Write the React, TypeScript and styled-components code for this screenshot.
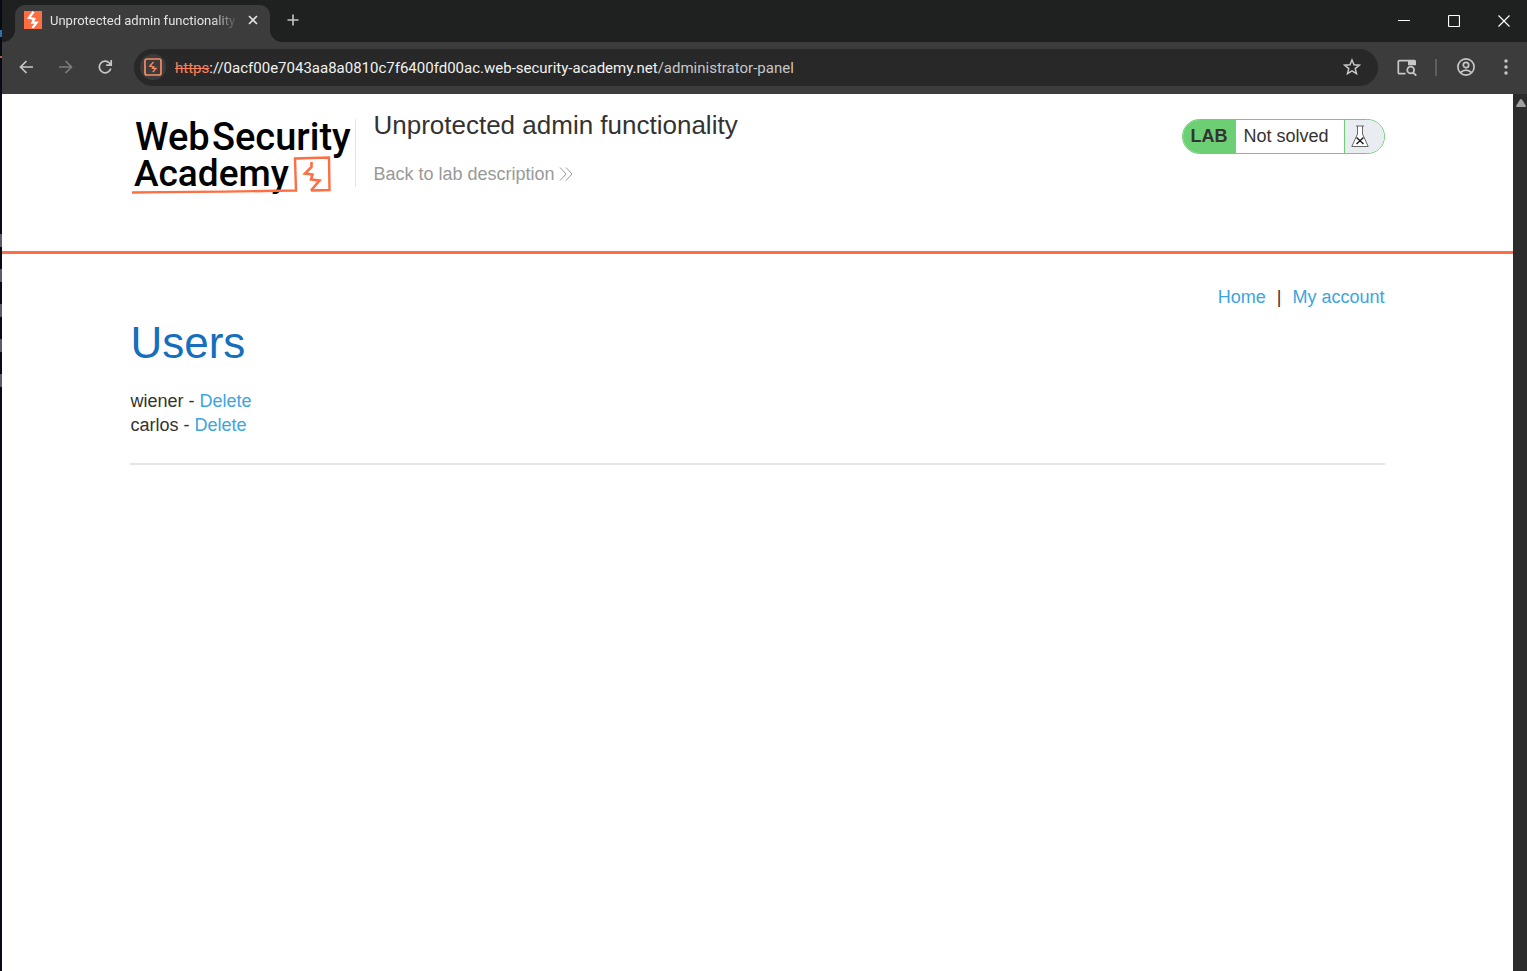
import React from "react";
import styled, { createGlobalStyle } from "styled-components";

const GlobalStyle = createGlobalStyle`
  *, *::before, *::after { box-sizing: border-box; }
  body { margin: 0; background: #ffffff; font-family: "Liberation Sans", Arial, sans-serif; }
  h1, h2, p, ul { margin: 0; padding: 0; font-weight: 400; }
  ul { list-style: none; }
  button { font: inherit; }
`;

const Desktop = styled.div`
  padding-left: 2px;
  background:
    linear-gradient(#2f6fb0, #2f6fb0) 0 30px / 2px 7px no-repeat,
    linear-gradient(#b5603f, #b5603f) 0 56px / 2px 2px no-repeat,
    repeating-linear-gradient(#5a5d66 0 13px, transparent 13px 35px) 0 234px / 2px 155px no-repeat,
    #070a12;
`;

const Window = styled.div`
  display: flex;
  flex-direction: column;
  min-height: 100vh;
  background: #ffffff;
`;

const TitleBar = styled.div`
  display: flex;
  align-items: stretch;
  height: 42px;
  background: #1f2120;
`;

const Tab = styled.div`
  position: relative;
  display: flex;
  align-items: center;
  width: 255px;
  margin: 5px 0 0 13px;
  padding: 0 7px 7px 9px;
  border-radius: 10px 10px 0 0;
  background: #3c3c3c;

  &::before, &::after {
    content: "";
    position: absolute;
    bottom: 0;
    width: 12px;
    height: 12px;
  }
  &::before { left: -12px; background: radial-gradient(circle at 0 0, #1f2120 12px, #3c3c3c 12px); }
  &::after { right: -12px; background: radial-gradient(circle at 100% 0, #1f2120 12px, #3c3c3c 12px); }
`;

const TabTitle = styled.span`
  flex: 1;
  min-width: 0;
  margin-left: 8px;
  padding-top: 2px;
  overflow: hidden;
  white-space: nowrap;
  color: #e3e3e3;
  font: 400 13px/18px Roboto, "Open Sans", sans-serif;
  mask-image: linear-gradient(to right, #000 84%, transparent 98%);
`;

const IconButton = styled.button<{ $size?: number; $color?: string }>`
  display: flex;
  align-items: center;
  justify-content: center;
  flex: none;
  width: ${(p) => p.$size ?? 28}px;
  height: ${(p) => p.$size ?? 28}px;
  padding: 0;
  border: 0;
  border-radius: 50%;
  background: transparent;
  color: ${(p) => p.$color ?? "#c7c7c7"};
`;

const NewTab = styled(IconButton)`
  margin: 6px 0 0 9px;
`;

const MenuButton = styled(IconButton)`
  margin-left: 12px;
`;

const WindowControls = styled.div`
  display: flex;
  gap: 4px;
  margin-left: auto;
`;

const WindowButton = styled.button`
  display: flex;
  align-items: center;
  justify-content: center;
  width: 46px;
  padding: 0;
  border: 0;
  background: transparent;
  color: #ffffff;
`;

const Toolbar = styled.div`
  display: flex;
  align-items: center;
  height: 52px;
  padding: 0 7px 2px 10px;
  background: #3c3c3c;
`;

const NavButtons = styled.div`
  display: flex;
  gap: 12px;
  margin-right: 14px;
`;

const AddressBar = styled.div`
  display: flex;
  align-items: center;
  flex: 1;
  height: 37px;
  padding: 0 12px 0 6px;
  border-radius: 19px;
  background: #282828;
`;

const SiteButton = styled(IconButton)`
  background: #3c3c3c;
`;

const Url = styled.span`
  flex: 1;
  margin-left: 9px;
  padding-top: 2px;
  white-space: nowrap;
  color: #c7c7c7;
  font: 400 15px/20px Roboto, "Open Sans", sans-serif;
`;

const Scheme = styled.s`
  color: #fa8059;
`;

const Host = styled.span`
  color: #f1f1f1;
`;

const ToolbarActions = styled.div`
  display: flex;
  align-items: center;
  margin-left: 15px;
`;

const Divider = styled.span`
  width: 2px;
  height: 17px;
  margin: 0 15px 0 14px;
  background: #5e5e5e;
`;

const Viewport = styled.div`
  display: flex;
  flex: 1;
`;

const Page = styled.main`
  flex: 1;
  color: #333332;
  font-size: 18px;
  line-height: 24px;
`;

const Scrollbar = styled.div`
  display: flex;
  justify-content: center;
  width: 14px;
  padding: 5px 0 0 2px;
  background: #2c2c2c;
`;

const Container = styled.div`
  width: 83%;
  margin: 0 auto;
`;

const LabHeader = styled.header`
  height: 160px;
  border-bottom: 3px solid #ff6d42;
`;

const HeaderRow = styled(Container)`
  display: flex;
  align-items: flex-start;
`;

const Logo = styled.a`
  display: block;
  width: 226px;
  height: 68px;
  margin-top: 25px;
  border-right: 1px solid #e4e4e4;
  text-decoration: none;

  svg { overflow: visible; }
`;

const TitleBlock = styled.div`
  flex: 1;
  padding: 15px 0 0 17px;
`;

const LabTitle = styled.h2`
  font-size: 26px;
  line-height: 32px;
`;

const BackLink = styled.a`
  display: inline-flex;
  align-items: center;
  gap: 4px;
  margin-top: 21px;
  color: #999999;
  text-decoration: none;
`;

const StatusPill = styled.div`
  display: flex;
  height: 35px;
  margin-top: 25px;
  overflow: hidden;
  border: 1px solid #6ccf74;
  border-radius: 18px;
  line-height: 33px;
`;

const StatusLabel = styled.strong`
  width: 53px;
  padding-left: 8px;
  background: #6ccf74;
`;

const StatusText = styled.p`
  width: 109px;
  padding-left: 8px;
  border-right: 1px solid #6ccf74;
`;

const StatusIcon = styled.span`
  display: flex;
  align-items: center;
  width: 39px;
  padding-left: 6px;
  background: #e9edf1;
`;

const TopLinks = styled.nav`
  display: flex;
  justify-content: flex-end;
  gap: 11px;
  padding-top: 31px;
`;

const Link = styled.a`
  color: #3ba5e0;
  text-decoration: none;
`;

const Heading = styled.h1`
  margin: 8px 0 20px;
  color: #156fbe;
  font-size: 44px;
  line-height: 52px;
`;

const UserList = styled.ul`
  padding-bottom: 26px;
  border-bottom: 2px solid #e5e5e5;
`;

const Svg = ({ w, h = w, children }: { w: number; h?: number; children: React.ReactNode }) => (
  <svg width={w} height={h} viewBox={`0 0 ${w} ${h}`} fill="none" stroke="currentColor" strokeWidth="2" aria-hidden="true">
    {children}
  </svg>
);

const users = ["wiener", "carlos"];

export default function App() {
  return (
    <Desktop>
      <GlobalStyle />
      <Window>
        <TitleBar>
          <Tab>
            <Svg w={18}>
              <rect width="18" height="18" fill="#ff6d42" stroke="none" />
              <path d="M9.6 0.8 L5 6.8 L10.2 8 L8.4 11.6 H12.6 L8.4 17" stroke="#fff" strokeWidth="2.3" />
            </Svg>
            <TabTitle>Unprotected admin functionality</TabTitle>
            <IconButton $size={20} $color="#e3e3e3" aria-label="Close tab">
              <Svg w={10}><path d="M1 1 L9 9 M9 1 L1 9" strokeWidth="1.6" /></Svg>
            </IconButton>
          </Tab>
          <NewTab aria-label="New tab">
            <Svg w={12}><path d="M6 0.5 V11.5 M0.5 6 H11.5" strokeWidth="1.6" /></Svg>
          </NewTab>
          <WindowControls>
            <WindowButton aria-label="Minimize"><Svg w={12}><path d="M0 5.5 H12" strokeWidth="1" /></Svg></WindowButton>
            <WindowButton aria-label="Maximize"><Svg w={12}><rect x="0.5" y="0.5" width="11" height="11" rx="1" strokeWidth="1.2" /></Svg></WindowButton>
            <WindowButton aria-label="Close"><Svg w={12}><path d="M0.5 0.5 L11.5 11.5 M11.5 0.5 L0.5 11.5" strokeWidth="1.2" /></Svg></WindowButton>
          </WindowControls>
        </TitleBar>
        <Toolbar>
          <NavButtons>
            <IconButton aria-label="Back">
              <Svg w={14}><path d="M14 7 H1.5 M7.5 1 L1.5 7 L7.5 13" strokeWidth="1.7" /></Svg>
            </IconButton>
            <IconButton $color="#7d7d7d" aria-label="Forward">
              <Svg w={14}><path d="M0 7 H12.5 M6.5 1 L12.5 7 L6.5 13" strokeWidth="1.7" /></Svg>
            </IconButton>
            <IconButton aria-label="Reload">
              <Svg w={16}><path d="M12.8 9.5 A5.8 5.8 0 1 1 11.4 4 L13.2 5.8 M13.2 1 V6.2 H8.2" strokeWidth="1.7" /></Svg>
            </IconButton>
          </NavButtons>
          <AddressBar>
            <SiteButton $size={26} $color="#fa8a63" aria-label="Site information">
              <Svg w={18}>
                <rect x="1" y="1" width="16" height="16" rx="2" strokeWidth="1.7" />
                <path d="M9.5 4 L5.8 8.2 L9.8 9 L8.6 10.4 H12 L8.8 14" strokeWidth="1.3" />
              </Svg>
            </SiteButton>
            <Url><Scheme>https</Scheme><Host>://0acf00e7043aa8a0810c7f6400fd00ac.web-security-academy.net</Host>/administrator-panel</Url>
            <IconButton aria-label="Bookmark this page">
              <Svg w={18}><path d="M9 2 L11 6.8 L16.2 7.2 L12.2 10.6 L13.5 15.7 L9 12.9 L4.5 15.7 L5.8 10.6 L1.8 7.2 L7 6.8 Z" strokeWidth="1.5" /></Svg>
            </IconButton>
          </AddressBar>
          <ToolbarActions>
            <IconButton aria-label="Search tabs">
              <Svg w={20} h={18}>
                <path d="M8.5 15.7 H2.5 Q1.3 15.7 1.3 14.5 V3.8 Q1.3 2.6 2.5 2.6 H11" strokeWidth="1.7" />
                <path d="M11 1.7 H17.5 Q19 1.7 19 3.2 V7.3 H11 Z" fill="currentColor" stroke="none" />
                <circle cx="13.7" cy="12" r="3.4" strokeWidth="1.8" />
                <path d="M16 14.3 L19.3 17.6" strokeWidth="1.9" />
              </Svg>
            </IconButton>
            <Divider />
            <IconButton aria-label="Profile">
              <Svg w={18}>
                <circle cx="9" cy="9" r="8.1" strokeWidth="1.7" />
                <circle cx="9" cy="7" r="2.7" strokeWidth="1.7" />
                <path d="M3.5 14.5 Q9 9.8 14.5 14.5" strokeWidth="1.7" />
              </Svg>
            </IconButton>
            <MenuButton aria-label="Menu">
              <Svg w={4} h={16}>
                <g fill="currentColor" stroke="none"><circle cx="2" cy="2" r="1.7" /><circle cx="2" cy="8" r="1.7" /><circle cx="2" cy="14" r="1.7" /></g>
              </Svg>
            </MenuButton>
          </ToolbarActions>
        </Toolbar>
        <Viewport>
          <Page>
            <LabHeader>
              <HeaderRow>
                <Logo href="#" aria-label="Web Security Academy">
                  <svg width="222" height="80" viewBox="0 0 222 80" fontFamily="Roboto, sans-serif" fontSize="38" fontWeight="500">
                    <text x="5" y="31">Web</text>
                    <text x="82" y="31">Security</text>
                    <text x="4" y="67" fontSize="37">Academy</text>
                    <g fill="none" stroke="#ff6d42">
                      <path d="M2 73.5 Q80 73 166 71.5 L165 39.5 L199 38.5 L199.5 71 L181 71.5" strokeWidth="2.4" />
                      <path d="M181.5 43 V48 L175 54.5 L182.5 55.5 L181 60.5 L189.5 61.5 L181 71.5" strokeWidth="2.6" />
                    </g>
                  </svg>
                </Logo>
                <TitleBlock>
                  <LabTitle>Unprotected admin functionality</LabTitle>
                  <BackLink href="#">
                    Back to lab description
                    <Svg w={14}><path d="M1 0.5 L7 7 L1 13.5 M7 0.5 L13 7 L7 13.5" strokeWidth="1" /></Svg>
                  </BackLink>
                </TitleBlock>
                <StatusPill>
                  <StatusLabel>LAB</StatusLabel>
                  <StatusText>Not solved</StatusText>
                  <StatusIcon>
                    <Svg w={18} h={23}>
                      <path d="M5 1 H13 M6.5 1 V9 L0.8 21.5 H17.2 L11.5 9 V1" fill="#fff" stroke="#666" strokeWidth="1" />
                      <path d="M5.5 12.5 L12.5 19 M12.5 12.5 L5.5 19" stroke="#222" strokeWidth="1.5" />
                    </Svg>
                  </StatusIcon>
                </StatusPill>
              </HeaderRow>
            </LabHeader>
            <Container>
              <TopLinks>
                <Link href="#">Home</Link>
                <span>|</span>
                <Link href="#">My account</Link>
              </TopLinks>
              <Heading>Users</Heading>
              <UserList>
                {users.map((name) => (
                  <li key={name}>{name} - <Link href="#">Delete</Link></li>
                ))}
              </UserList>
            </Container>
          </Page>
          <Scrollbar>
            <Svg w={12} h={8}><path d="M5 0.5 Q6 -0.5 7 0.5 L11 7 Q11 8 10 8 H2 Q1 8 1 7 Z" fill="#a0a0a0" stroke="none" /></Svg>
          </Scrollbar>
        </Viewport>
      </Window>
    </Desktop>
  );
}
